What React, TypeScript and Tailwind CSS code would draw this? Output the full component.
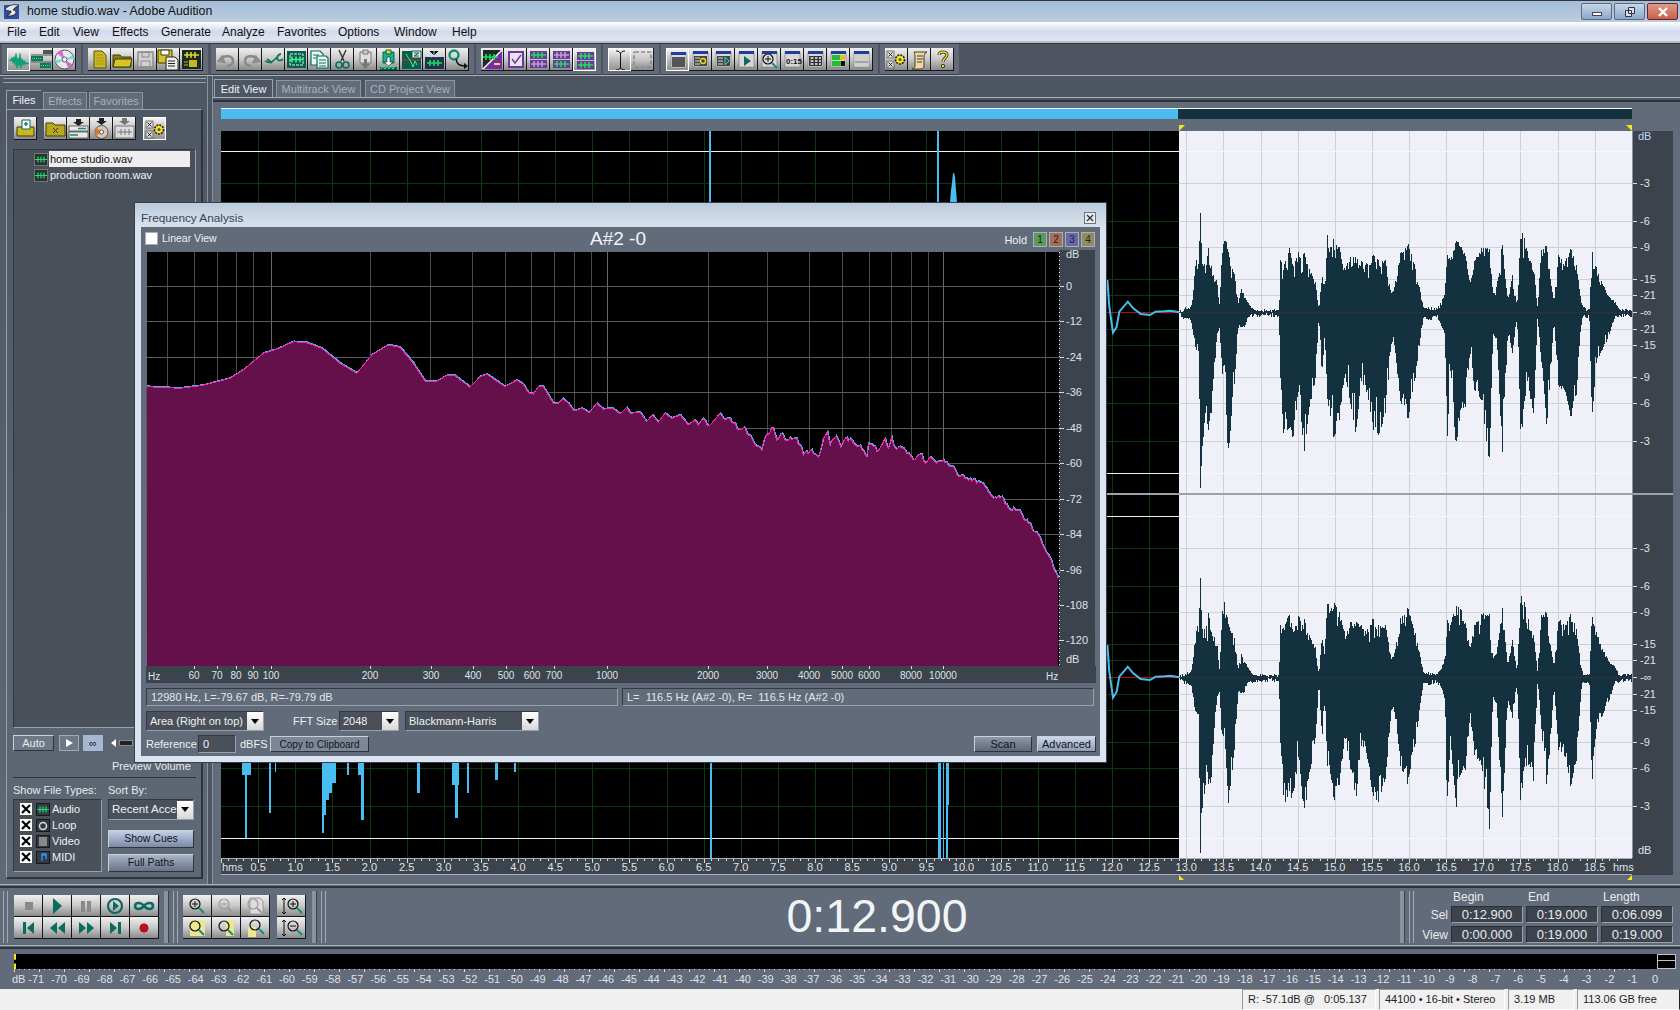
import React from "react";

type Kids = { children?: React.ReactNode };

// ---- data for the drawings ----

const freqZoom6 = [[50,560],[150,565],[220,556],[300,535],[340,510],[400,460],[440,448],[490,425],[530,428],[575,445],[630,490],[680,520],[725,465],[775,435],[810,442],[850,490],[885,543],[920,544],[950,527],[975,527],[1020,562],[1050,530],[1070,523],[1125,560],[1160,541],[1180,553],[1195,578],[1210,582],[1225,560],[1240,560],[1270,610],[1285,610],[1298,596],[1315,610],[1332,633],[1355,625],[1378,638],[1400,610],[1420,628],[1447,624],[1470,642],[1490,622]];
const freqZoom7 = [[0,640],[30,637],[50,665],[67,645],[85,667],[105,640],[125,655],[150,645],[175,675],[195,660],[205,675],[218,655],[232,677],[250,662],[270,640],[285,660],[295,655],[310,670],[330,690],[340,683],[365,715],[385,740],[395,750],[405,710],[430,685],[440,720],[455,700],[465,720],[500,715],[520,765],[545,750],[565,772],[580,715],[592,695],[600,735],[618,708],[632,740],[645,716],[665,720],[675,735],[690,735],[710,770],[715,730],[730,740],[745,752],[765,715],[775,745],[785,712],[795,745],[820,745],[850,780],[875,762],[885,790],[900,772],[920,790],[940,778],[965,798],[985,830],[1010,835],[1060,852],[1090,895],[1115,890],[1135,925],[1165,930],[1180,955],[1200,970],[1210,995],[1225,1005],[1245,1050],[1260,1075],[1275,1115],[1285,1135]];
const freqKnots = [
  ...freqZoom6.map(([x, y]) => [130 + x / 3, 200 + y / 3]),
  ...freqZoom7.map(([x, y]) => [630 + x / 3, 200 + y / 3]),
];

// the right half of the curve is jagged, so split it up and add a little noise
function buildFreq() {
  let s = 23;
  const rnd = () => {
    s = (s * 9301 + 49297) % 233280;
    return s / 233280 - 0.5;
  };
  const out: number[][] = [];
  freqKnots.forEach(([x, y], i) => {
    out.push([x, y]);
    const next = freqKnots[i + 1];
    if (!next || x < 700) return;
    const steps = Math.floor((next[0] - x) / 1.6);
    for (let j = 1; j < steps; j++) {
      const k = j / steps;
      out.push([x + (next[0] - x) * k, y + (next[1] - y) * k + rnd() * 4.5]);
    }
  });
  return out;
}
const freqPts = buildFreq();
const freqLine = freqPts.map(([x, y]) => `${x.toFixed(1)},${y.toFixed(1)}`).join(" ");
const freqArea = `147,666 ${freqLine} 1058,666`;

const envelope = [[214,577,577],[225,570,590],[245,560,600],[250,520,640],[258,405,690],[265,430,690],[270,278,1100],[275,430,980],[285,430,890],[292,380,930],[300,440,880],[315,470,640],[322,560,620],[328,380,770],[336,345,730],[344,385,1040],[352,430,920],[362,460,790],[372,550,620],[380,505,622],[390,530,620],[398,545,590],[410,570,585],[440,572,582],[482,573,582],[486,420,770],[495,430,965],[510,380,920],[520,440,955],[535,390,810],[550,395,1000],[565,450,860],[580,480,780],[590,570,585],[598,450,770],[606,500,640],[612,335,840],[620,380,880],[630,348,960],[645,380,900],[660,440,760],[675,410,850],[690,410,945],[705,420,780],[720,430,820],[735,395,930],[750,420,950],[770,420,880],[785,520,680],[792,510,660],[810,400,840],[830,365,900],[850,440,780],[865,520,650],[872,560,590],[885,565,595],[910,570,585],[930,520,640],[936,390,990],[945,420,750],[960,355,985],[975,375,860],[985,400,865],[998,490,690],[1010,420,810],[1030,380,840],[1050,380,1045],[1060,520,640],[1070,500,655],[1085,365,1010],[1100,540,640],[1112,460,700],[1125,560,590],[1135,325,980],[1145,350,840],[1160,420,840],[1170,440,890],[1180,560,590],[1190,390,720],[1205,375,920],[1218,500,720],[1225,540,610],[1237,400,800],[1255,420,810],[1270,385,910],[1285,430,830],[1300,560,590],[1320,575,585],[1327,385,900],[1340,440,720],[1355,490,690],[1375,530,640],[1390,545,585],[1400,568,585],[1437,572,582]];

function channelPath(shift: number, seed: number) {
  let s = seed;
  const rnd = () => {
    s = (s * 9301 + 49297) % 233280;
    return s / 233280;
  };
  let d = "";
  for (let i = 0; i < envelope.length - 1; i++) {
    const [x0, t0, b0] = envelope[i];
    const [x1, t1, b1] = envelope[i + 1];
    const px0 = 1100 + x0 / 2.7;
    const px1 = 1100 + x1 / 2.7;
    for (let x = Math.ceil(px0); x < px1; x++) {
      const k = (x - px0) / (px1 - px0);
      const top = t0 + (t1 - t0) * k;
      const bot = b0 + (b1 - b0) * k;
      const keep = Math.min(1, Math.min(k, 1 - k) * 5);
      const jt = rnd() * rnd() * (577 - top) * 0.4 * keep;
      const jb = rnd() * rnd() * (bot - 577) * 0.4 * keep;
      // quiet stretches get an uneven noise floor
      const nt = bot - top < 30 ? rnd() * 9 - 3 : 0;
      const nb = bot - top < 30 ? rnd() * 11 - 5 : 0;
      d += `M${x}.5 ${(120 + (top + jt - nt) / 3 + shift).toFixed(1)}V${(120 + (bot - jb + nb) / 3 + shift + 1).toFixed(1)}`;
    }
  }
  return d;
}
const tailPts = [[20,480],[25,560],[35,638],[45,620],[52,575],[75,545],[90,565],[110,582],[135,585],[150,575],[175,574],[190,572],[214,577]]
  .map(([x, y]) => `${(1100 + x / 2.7).toFixed(1)},${(120 + y / 3).toFixed(1)}`)
  .join(" ");

const dbRows: [number, string][] = [[183,"-3"],[221,"-6"],[247,"-9"],[279,"-15"],[295,"-21"],[312,"-∞"],[329,"-21"],[345,"-15"],[377,"-9"],[403,"-6"],[441,"-3"]];
const timeX = (t: number) => 221 + 74.25 * t;
const times = Array.from({ length: 37 }, (_, i) => (i + 1) * 0.5);
const ticks = Array.from({ length: 189 }, (_, i) => i * 0.1);
const blueSpikes: [number, number, number][] = [[245,2,838],[242,9,775],[269,2,813],[275,1,772],[322,2,833],[324,2,815],[326,3,800],[329,3,793],[332,4,783],[347,2,775],[361,3,820],[358,6,775],[417,3,793],[455,3,818],[452,7,785],[467,2,793],[495,3,780],[514,2,772],[710,2,858],[938,3,858],[943,1,858],[946,2,858],[948,1,805]];

const hzGrid = [167,194,217,236,253,271,370,430,472,505,531,554,574,591,607,708,767,809,842,869,891,911,928,943,1045];
const hzLabels: [number, string][] = [[194,"60"],[217,"70"],[236,"80"],[253,"90"],[271,"100"],[370,"200"],[431,"300"],[473,"400"],[506,"500"],[532,"600"],[554,"700"],[607,"1000"],[708,"2000"],[767,"3000"],[809,"4000"],[842,"5000"],[869,"6000"],[911,"8000"],[943,"10000"]];
const freqDb: [number, string][] = [[286,"0"],[321,"-12"],[357,"-24"],[392,"-36"],[428,"-48"],[463,"-60"],[499,"-72"],[534,"-84"],[570,"-96"],[605,"-108"],[640,"-120"]];
const meterDb = Array.from({ length: 72 }, (_, i) => -71 + i);

// ---- small icons ----

function Ic({ children, w = 23 }: Kids & { w?: number }) {
  return (
    <svg width={w} height={w === 23 ? 23 : 22} viewBox={`0 0 ${w} ${w === 23 ? 23 : 22}`} className="block">
      {children}
    </svg>
  );
}

const WAVE = "M1 11.500h2l1-3 1 6 1-7 1 9 1-12 1 15 1-11 1 9 1-13 1 15 1-10 1 7 1-5 1 4 1-2 1 1h2";

function WaveLines({ y = 11, c = "#1fdc5a", x = 0 }: { y?: number; c?: string; x?: number }) {
  return <path d={`M${x + 4} ${y}h15M${x + 7} ${y - 3}v6M${x + 11} ${y - 3}v6M${x + 15} ${y - 3}v6`} stroke={c} strokeWidth="1.6" fill="none" />;
}

function Mag({ x = 9, y = 9, fill = "none", c = "#111", h = "#0f8f7f", sign }: { x?: number; y?: number; fill?: string; c?: string; h?: string; sign?: string }) {
  return (
    <g>
      <circle cx={x} cy={y} r="5" fill={fill} stroke={c} strokeWidth="1.2" />
      <path d={`M${x + 4} ${y + 4}l5 5`} stroke={h} strokeWidth="2" />
      {sign && <path d={sign === "+" ? `M${x - 3} ${y}h6M${x} ${y - 3}v6` : `M${x - 3} ${y}h6`} stroke={c} strokeWidth="1" />}
    </g>
  );
}

function Win({ children }: Kids) {
  return (
    <Ic>
      <rect x="4" y="4" width="15" height="15" fill="#d8d8d8" stroke="#777" strokeWidth="0.6" />
      <rect x="4" y="3" width="15" height="3" fill="#1f3d9a" />
      {children}
    </Ic>
  );
}

function Gear() {
  return (
    <Ic>
      <rect x="2" y="3" width="7" height="7" fill="#ddd" stroke="#333" strokeWidth="0.6" />
      <path d="M3.5 4.5l4 4M7.5 4.5l-4 4" stroke="#222" />
      <rect x="2" y="13" width="7" height="7" fill="#ddd" stroke="#333" strokeWidth="0.6" />
      <path d="M3.5 14.5l4 4M7.5 14.5l-4 4" stroke="#222" />
      <circle cx="15" cy="11.500" r="4.500" fill="#f2e21e" stroke="#222" strokeWidth="1.600" strokeDasharray="2 1" />
      <circle cx="15" cy="11.500" r="1.500" fill="#555" />
    </Ic>
  );
}

const icons: Record<string, React.ReactNode> = {
  wave: <Ic><path d={WAVE} stroke="#0f9f78" strokeWidth="1.300" fill="none" /></Ic>,
  multi: <Ic><rect x="1" y="8" width="12" height="5" fill="#0c7a5a" /><rect x="10" y="15" width="11" height="5" fill="#0c7a5a" /><rect x="13" y="2" width="9" height="4" fill="#555" /><path d="M1 7h21M1 14h21" stroke="#555" /><path d="M2 10.500h10M11 17.500h9" stroke="#3fe08a" strokeDasharray="1 1" /></Ic>,
  cd: <Ic><circle cx="11.500" cy="11.500" r="9.500" fill="#e8e8ee" stroke="#555" /><path d="M11.500 11.500L4 5l5-3zM11.500 11.500l8 5-4 4z" fill="#d86ad8" /><path d="M11.500 11.500L20 7l1 4zM11.500 11.500L3 16l-1-4z" fill="#7ad8d0" /><circle cx="11.500" cy="11.500" r="2.500" fill="#fff" stroke="#555" /></Ic>,
  newDoc: <Ic><path d="M6 3h8l4 4v13H6z" fill="#c9b71f" stroke="#5a5210" /><path d="M8 7h7M8 10h8M8 13h8M8 16h8" stroke="#a8981a" /></Ic>,
  open: <Ic><path d="M2 7h7l2 2h9v10H2z" fill="#8a7c18" stroke="#3f3a0c" /><path d="M4 11h17l-2 8H2z" fill="#d6c522" stroke="#3f3a0c" /></Ic>,
  save: <Ic><path d="M4 4h15v15H4z" fill="#d0d0d0" stroke="#8a8a8a" strokeWidth="1.400" /><path d="M8 4h7v5H8zM7 13h9v6H7z" fill="none" stroke="#8a8a8a" /></Ic>,
  saveAs: <Ic><path d="M1 2h14v13H1z" fill="#d6c522" stroke="#3f3a0c" /><path d="M4 2h8v5H4z" fill="#fff" stroke="#3f3a0c" /><path d="M9 9h9l3 3v10H9z" fill="#eee" stroke="#222" /><path d="M11 13h7M11 15.500h7M11 18h7" stroke="#222" /></Ic>,
  insert: <Ic><rect x="2" y="2" width="19" height="19" fill="#1a2a22" /><WaveLines y={7} c="#e6d620" /><rect x="9" y="12" width="8" height="7" fill="#c9b71f" /><path d="M4 14h4M4 17h4" stroke="#c9b71f" /></Ic>,
  undo: <Ic><path d="M6 9l-3 4 5 1zM5 11c3-4 12-4 12 2 0 3-3 5-6 5" stroke="#8a8a8a" strokeWidth="2.400" fill="none" /></Ic>,
  redo: <Ic><path d="M17 9l3 4-5 1zM18 11c-3-4-12-4-12 2 0 3 3 5 6 5" stroke="#8a8a8a" strokeWidth="2.400" fill="none" /></Ic>,
  cue: <Ic><path d="M3 13c5 3 8 1 14-6M19 6c-3 0-5 4-3 6 2 1 4 0 5-1M5 11l5 4" stroke="#0c7a5a" strokeWidth="1.800" fill="none" /></Ic>,
  crop: <Ic><rect x="2" y="3" width="19" height="17" fill="#0a5e4e" /><rect x="5" y="6" width="13" height="11" fill="none" stroke="#d8f0e8" strokeDasharray="3 1" /><WaveLines y={11.500} c="#3ff08a" /></Ic>,
  copy: <Ic><path d="M3 3h9l3 3v11H3z" fill="#eafaf4" stroke="#0c6b5e" strokeWidth="1.200" /><path d="M9 8h9l2 2v10H9z" fill="#eafaf4" stroke="#0c6b5e" strokeWidth="1.200" /><path d="M5 7h6M5 10h3M11 12h7M11 15h7M11 18h7" stroke="#0c6b5e" /></Ic>,
  cut: <Ic><path d="M8 2l5 11M15 2l-5 11" stroke="#333" strokeWidth="1.400" /><circle cx="8" cy="17" r="3" fill="none" stroke="#0c6b5e" strokeWidth="1.600" /><circle cx="15" cy="17" r="3" fill="none" stroke="#0c6b5e" strokeWidth="1.600" /></Ic>,
  pasteOff: <Ic><path d="M6 4h11v11H6z" fill="#ddd" stroke="#777" /><path d="M9 2h5v4H9z" fill="#ccc" stroke="#777" /><path d="M10 11h3v5h3l-4.500 5L7 16h3z" fill="#777" /></Ic>,
  paste: <Ic><path d="M6 4h11v11H6z" fill="#19b09a" stroke="#064" /><path d="M9 2h5v4H9z" fill="#e6d620" stroke="#064" /><path d="M10 9h3v5h3l-4.500 4L7 14h3z" fill="#fff" stroke="#111" strokeWidth="0.600" /><path d="M3 19h17v3H3z" fill="#0a5e4e" /><path d="M4 21l2-3 2 3 2-3 2 3 2-3 2 3 2-3" stroke="#3ff08a" fill="none" /></Ic>,
  mix: <Ic><rect x="2" y="3" width="19" height="18" fill="#0a5e4e" /><rect x="12" y="3" width="9" height="7" fill="#e8f0ee" stroke="#0a5e4e" /><path d="M14 5h5l-5 3h5" stroke="#0a5e4e" fill="none" /><path d="M2 12h19" stroke="#e02020" /><path d="M6 6l5 8 2 5 2-6 2 4" stroke="#3ff08a" fill="none" /></Ic>,
  spark: <Ic><rect x="2" y="9" width="19" height="12" fill="#20344e" /><path d="M11 1v7M6 3l5 5 5-5M4 7l5 2M18 7l-5 2" stroke="#b8e8e0" /><WaveLines y={15} /></Ic>,
  qArrow: <Ic><circle cx="8" cy="7" r="4.500" fill="none" stroke="#0f8f6f" strokeWidth="2.400" /><path d="M10 11c1 5 3 7 9 7" stroke="#111" strokeWidth="1.400" fill="none" /><path d="M18 15l4 3-4 3z" fill="#111" /></Ic>,
  diag: <Ic><rect x="2" y="2" width="19" height="19" fill="#1c2a26" /><path d="M21 2v19H2z" fill="#7a2aa8" /><path d="M2 21L21 2" stroke="#fff" strokeWidth="1.400" /><WaveLines y={9} x={-2} /><path d="M13 16h6" stroke="#f4e020" strokeWidth="2" /></Ic>,
  check: <Ic><rect x="5" y="4" width="14" height="15" fill="#e8e2f2" stroke="#6a3a9a" strokeWidth="2" /><path d="M8 11l3 4 6-8" stroke="#6a3a9a" strokeWidth="1.400" fill="none" /></Ic>,
  grid1: <Ic><rect x="3" y="3" width="17" height="8" fill="#6a3a9a" /><rect x="3" y="12" width="17" height="8" fill="#6a3a9a" /><WaveLines y={7} /><WaveLines y={16} c="#b8a0c8" /></Ic>,
  grid2: <Ic><rect x="3" y="3" width="17" height="8" fill="#6a3a9a" /><rect x="3" y="12" width="17" height="8" fill="#6a3a9a" /><WaveLines y={7} c="#b8a0c8" /><WaveLines y={16} /></Ic>,
  grid3: <Ic><rect x="3" y="3" width="17" height="8" fill="#6a3a9a" /><rect x="3" y="12" width="17" height="8" fill="#6a3a9a" /><WaveLines y={7} /><WaveLines y={16} /></Ic>,
  ibeam: <Ic><path d="M7 2c3 0 4 1 4.500 3v13c-.5 2-1.500 3-4.500 3M16 2c-3 0-4 1-4.500 3v13c.5 2 1.500 3 4.500 3" stroke="#111" fill="none" /></Ic>,
  dashed: <Ic><rect x="3" y="4" width="17" height="15" rx="1" fill="none" stroke="#8a8a8a" strokeWidth="1.600" strokeDasharray="4 2" /></Ic>,
  w1: <Win><rect x="5" y="8" width="13" height="10" fill="#555" /></Win>,
  w2: <Win><rect x="5" y="8" width="13" height="10" fill="#444" /><path d="M6 10h5M6 13h5M6 16h5" stroke="#ddd" /><circle cx="14" cy="13" r="2.500" fill="none" stroke="#e6d620" strokeWidth="1.400" /></Win>,
  w3: <Win><rect x="5" y="8" width="13" height="10" fill="#444" /><path d="M6 10h5M6 13h5M6 16h5" stroke="#ddd" /><path d="M13 9l4 4-4 4z" fill="none" stroke="#3fd0c0" /></Win>,
  w4: <Win><path d="M9 8l7 5-7 5z" fill="#0c6b5e" /></Win>,
  w5: <Win><Mag x={10} y={11} sign="+" /></Win>,
  w6: <Win><text x="5" y="16" className="text-[8px] font-bold" fill="#111">0:15</text></Win>,
  w7: <Win><rect x="5" y="8" width="13" height="10" fill="#333" /><path d="M6.500 10h3M11 10h2.500M15 10h2M6.500 13h3M11 13h2.500M15 13h2M6.500 16h3M11 16h2.500M15 16h2" stroke="#eee" strokeWidth="1.500" /></Win>,
  w8: <Win><rect x="5" y="7" width="13" height="5" fill="#22c030" /><rect x="13" y="7" width="5" height="5" fill="#e8c020" /><rect x="5" y="13" width="13" height="5" fill="#22c030" /><rect x="14" y="13" width="4" height="5" fill="#111" /></Win>,
  w9: <Win><rect x="4.500" y="6" width="14" height="12.500" fill="#cfcfcf" /><path d="M5 14h13" stroke="#777" /></Win>,
  gear: <Gear />,
  scroll: <Ic><path d="M6 4h13c-2 1-3 3-3 5v9c0 2-2 3-4 3H4c2 0 3-2 3-3V8C7 6 6 5 6 4z" fill="#ecd9a8" stroke="#4a3a20" /><path d="M9 8h6M9 11h6M9 14h5" stroke="#4a3a20" /></Ic>,
  help: <Ic><path d="M8 7c0-4 8-4 8 0 0 3-4 3-4 7" stroke="#333" strokeWidth="3" fill="none" /><path d="M8 7c0-4 8-4 8 0 0 3-4 3-4 7" stroke="#f2e21e" strokeWidth="1.400" fill="none" /><circle cx="12" cy="18" r="1.700" fill="#f2e21e" stroke="#333" /></Ic>,
  fOpen: <Ic><path d="M3 10h17v9H3z" fill="#c9b71f" stroke="#3f3a0c" /><path d="M8 3h8v9H8z" fill="#fff" stroke="#0c6b5e" /><path d="M10 7h4M12 5v4" stroke="#0c8f6f" strokeWidth="1.500" /></Ic>,
  fClose: <Ic><path d="M2 6h7l2 2h10v11H2z" fill="#b8a81e" stroke="#3f3a0c" /><path d="M9 11l5 5M14 11l-5 5" stroke="#3f3a0c" /></Ic>,
  fInsert: <Ic><path d="M9 2h5v3h3l-5.500 4L6 5h3z" fill="#222" /><rect x="2" y="9" width="19" height="5" fill="#e8e8e8" stroke="#222" strokeWidth="0.600" /><rect x="2" y="15" width="19" height="6" fill="#e8e8e8" stroke="#222" strokeWidth="0.600" /><path d="M11 11.500h8M3 18h8" stroke="#0c8f6f" strokeWidth="1.600" /></Ic>,
  fCd: <Ic><path d="M9 1h5v3h3l-5.500 4L6 4h3z" fill="#222" /><circle cx="11.500" cy="15" r="6.500" fill="#d8c8b8" stroke="#555" /><path d="M11.500 15L6 19l-1-4 2-4z" fill="#e07a20" /><circle cx="11.500" cy="15" r="2" fill="#fff" stroke="#555" /></Ic>,
  fGray: <Ic><path d="M9 1h5v3h3l-5.500 4L6 4h3z" fill="#777" /><rect x="2" y="9" width="19" height="12" fill="#ddd" stroke="#777" /><path d="M4 15h15M8 12v6M12 12v6M16 12v6" stroke="#777" /></Ic>,
  stop: <Ic w={29}><rect x="11" y="7" width="8" height="8" fill="#8a8a8a" /></Ic>,
  play: <Ic w={29}><path d="M10 3l9 8-9 8z" fill="#0c6b5e" /></Ic>,
  pause: <Ic w={29}><path d="M9 6h4v11H9zM15 6h4v11h-4z" fill="#8a8a8a" /></Ic>,
  playCircle: <Ic w={29}><circle cx="14" cy="11" r="7" fill="none" stroke="#0c6b5e" strokeWidth="2.200" /><path d="M12 6l6 5-6 5z" fill="#0c6b5e" /></Ic>,
  loop: <Ic w={29}><path d="M14 11c-3-4-9-4-9 0s6 4 9 0c3-4 9-4 9 0s-6 4-9 0z" fill="none" stroke="#0c6b5e" strokeWidth="2.600" /></Ic>,
  first: <Ic w={29}><path d="M9 5h3v12H9zM20 5v12l-7-6z" fill="#0c6b5e" /></Ic>,
  rew: <Ic w={29}><path d="M14 5v12l-7-6zM22 5v12l-7-6z" fill="#0c6b5e" /></Ic>,
  ff: <Ic w={29}><path d="M7 5v12l7-6zM15 5v12l7-6z" fill="#0c6b5e" /></Ic>,
  last: <Ic w={29}><path d="M9 5v12l7-6zM17 5h3v12h-3z" fill="#0c6b5e" /></Ic>,
  rec: <Ic w={29}><circle cx="14" cy="11" r="4.500" fill="#b80f1f" /></Ic>,
  zIn: <Ic w={29}><Mag x={12} y={9} sign="+" /></Ic>,
  zOut: <Ic w={29}><Mag x={12} y={9} sign="-" c="#999" h="#999" /></Ic>,
  zDoc: <Ic w={29}><path d="M9 3h10l3 3v13H9z" fill="#ddd" stroke="#999" /><Mag x={12} y={9} c="#999" h="#999" /></Ic>,
  zY1: <Ic w={29}><rect x="7" y="3" width="15" height="16" fill="#ece890" /><Mag x={12} y={9} /></Ic>,
  zY2: <Ic w={29}><rect x="14" y="3" width="8" height="16" fill="#ece890" /><Mag x={12} y={9} /></Ic>,
  zY3: <Ic w={29}><rect x="7" y="10" width="8" height="10" fill="#ece890" /><Mag x={14} y={8} /></Ic>,
  zvIn: <Ic w={29}><path d="M7 3v16M5 5l2-2 2 2M5 17l2 2 2-2" stroke="#111" fill="none" /><Mag x={16} y={9} sign="+" /></Ic>,
  zvOut: <Ic w={29}><path d="M7 3v16M5 5l2-2 2 2M5 17l2 2 2-2" stroke="#111" fill="none" /><Mag x={16} y={9} sign="-" /></Ic>,
};

// ---- buttons ----

function Tool({ name, on }: { name: string; on?: boolean }) {
  return (
    <div
      className={
        on
          ? "h-[23px] w-[23px] border-t border-l border-[#111] border-r-white border-b-white bg-gradient-to-b from-[#f4f4f4] via-[#bdbdbd] to-[#8f8f8f] outline outline-white -outline-offset-1"
          : "h-[23px] w-[23px] border-r border-b border-[#14171b] bg-gradient-to-b from-[#f0f0f0] via-[#c9c9c9] to-[#8b8b8b]"
      }
    >
      {icons[name]}
    </div>
  );
}

function Group({ names, on = [], className }: { names: string[]; on?: string[]; className: string }) {
  return (
    <div className={`flex h-[31px] items-center border-b border-[#3c424b] bg-[#636b78] px-[5px] ${className}`}>
      {names.map((n) => (
        <Tool key={n} name={n} on={on.includes(n)} />
      ))}
    </div>
  );
}

function TransBtn({ name }: { name: string }) {
  return (
    <div className="h-[22px] w-[29px] border-r border-b border-[#14171b] bg-gradient-to-b from-[#f0f0f0] via-[#c9c9c9] to-[#8b8b8b]">
      {icons[name]}
    </div>
  );
}

function Grip() {
  return <div className="h-[52px] w-[5px] border-x border-[#a0a8b2] bg-[#626b79]" />;
}

function Sep() {
  return <div className="h-[52px] w-[5px] border-r border-[#3c424b] bg-[#8a929e]" />;
}

function Select({ label, className }: { label: string; className: string }) {
  return (
    <div className={`flex h-[20px] items-center justify-between border border-t-[#353a42] border-l-[#353a42] border-r-[#98a0aa] border-b-[#98a0aa] bg-[#4a505a] pl-[3px] text-[#eef0f2] ${className}`}>
      <span className="overflow-hidden whitespace-nowrap">{label}</span>
      <div className="flex h-[18px] w-[16px] shrink-0 items-center justify-center bg-gradient-to-b from-white to-[#d8d8d8]">
        <div className="h-0 w-0 border-x-[4px] border-t-[5px] border-x-transparent border-t-black" />
      </div>
    </div>
  );
}

function FlatBtn({ label, className }: { label: string; className: string }) {
  return (
    <div className={`flex items-center justify-center border border-t-[#c8d0d8] border-l-[#c8d0d8] border-r-[#2f343b] border-b-[#2f343b] text-[#10141a] ${className}`}>
      {label}
    </div>
  );
}

function FileType({ name, icon }: { name: string; icon: React.ReactNode }) {
  return (
    <div className="flex h-[16px] items-center pl-[6px]">
      <div className="h-[12px] w-[12px] bg-white">
        <svg width="12" height="12" viewBox="0 0 12 12"><path d="M2 2l8 8M10 2l-8 8" stroke="#000" strokeWidth="2.200" /></svg>
      </div>
      <div className="ml-[4px] h-[13px] w-[14px] border border-[#15181c] bg-[#353a42]">{icon}</div>
      <span className="ml-[2px] text-[11px] text-[#eef0f2]">{name}</span>
    </div>
  );
}

const miniWave = <svg width="12" height="11" viewBox="0 0 12 11"><path d="M0 5.500h12M3 2.500v6M6 2.500v6M9 2.500v6" stroke="#1fdc7a" strokeWidth="1.200" /></svg>;

// ---- panels ----

function LeftPanel() {
  return (
    <aside className="flex w-[207px] shrink-0 flex-col bg-gradient-to-b from-[#4f5663] to-[#5f6875]">
      <div className="mt-[2px] ml-[3px] h-[5px] w-[203px] border-y border-[#98a0aa]" />
      <div className="mt-[7px] ml-[6px] flex h-[19px] items-end text-[11px]">
        <div className="flex h-[19px] w-[35px] items-center justify-center border-t border-l border-[#98a0aa] border-r-[#2f343b] text-[#f0f2f4]">Files</div>
        <div className="ml-[2px] flex h-[17px] w-[44px] items-center justify-center border-t border-x border-[#8c94a0] bg-[#626b79] text-[#aab0b8]">Effects</div>
        <div className="ml-[2px] flex h-[17px] w-[54px] items-center justify-center border-t border-x border-[#8c94a0] bg-[#626b79] text-[#aab0b8]">Favorites</div>
      </div>
      <div className="ml-[6px] flex h-[770px] w-[197px] flex-col border-t border-l border-[#98a0aa] border-r-2 border-b-2 border-r-[#2f343b] border-b-[#2f343b] px-[6px]">
        <div className="mt-[7px] flex pl-[1px]">
          <Tool name="fOpen" />
          <div className="ml-[7px] flex">
            <Tool name="fClose" />
            <Tool name="fInsert" />
            <Tool name="fCd" />
            <Tool name="fGray" />
          </div>
          <div className="ml-[7px]">
            <Tool name="gear" on />
          </div>
        </div>
        <div className="mt-[9px] h-[579px] w-[183px] border-t border-l border-[#33383f] border-r border-b border-r-[#98a0aa] border-b-[#98a0aa] bg-[#4a505a] pt-[1px] pl-[20px] text-[11px]">
          <div className="flex h-[16px] items-center">
            <div className="h-[13px] w-[14px] border border-[#777] bg-[#26322c]">{miniWave}</div>
            <div className="ml-[1px] flex h-[16px] w-[141px] items-center bg-[#eeeeee] pl-[1px] text-[#111]">home studio.wav</div>
          </div>
          <div className="flex h-[16px] items-center">
            <div className="h-[13px] w-[14px] border border-[#777] bg-[#26322c]">{miniWave}</div>
            <div className="ml-[1px] pl-[1px] text-[#f0f2f4]">production room.wav</div>
          </div>
        </div>
        <div className="mt-[7px] flex h-[16px] items-center">
          <FlatBtn label="Auto" className="h-[16px] w-[41px] bg-[#6e7785] text-[11px] !text-[#e8eaec]" />
          <div className="ml-[5px] flex h-[16px] w-[20px] items-center justify-center border border-[#a0a8b2] bg-[#6e7785]">
            <div className="h-0 w-0 border-y-[4px] border-l-[7px] border-y-transparent border-l-white" />
          </div>
          <div className="ml-[4px] flex h-[16px] w-[20px] items-center justify-center bg-[#a7b7d0] text-[11px] text-[#222]">∞</div>
          <div className="ml-[8px] h-0 w-0 border-y-[4px] border-r-[5px] border-y-transparent border-r-white" />
          <div className="ml-[3px] h-[6px] w-[14px] border border-[#888] bg-[#222]" />
        </div>
        <div className="mt-[8px] h-[14px] pl-[99px] text-[11px] leading-[14px] whitespace-nowrap text-[#e8eaec]">Preview Volume</div>
        <div className="mt-[3px] h-[2px] w-[183px] border-b border-[#2f343b]" />
        <div className="mt-[5px] flex h-[15px] text-[11px] leading-[15px] text-[#e8eaec]">
          <span className="w-[95px]">Show File Types:</span>
          <span>Sort By:</span>
        </div>
        <div className="mt-[1px] flex">
          <div className="h-[73px] w-[89px] border border-t-[#33383f] border-l-[#33383f] border-r-[#98a0aa] border-b-[#98a0aa] bg-[#4a505a] pt-[1px]">
            <FileType name="Audio" icon={miniWave} />
            <FileType name="Loop" icon={<svg width="12" height="11" viewBox="0 0 12 11"><circle cx="6" cy="6" r="3.500" fill="none" stroke="#ddd" strokeWidth="1.500" /></svg>} />
            <FileType name="Video" icon={<svg width="12" height="11" viewBox="0 0 12 11"><rect x="2" y="1" width="8" height="9" fill="#888" /></svg>} />
            <FileType name="MIDI" icon={<svg width="12" height="11" viewBox="0 0 12 11"><path d="M5 9V2h4v5M5 3h4" stroke="#2f8fff" strokeWidth="1.400" fill="none" /></svg>} />
          </div>
          <div className="ml-[6px] w-[86px]">
            <Select label="Recent Acce" className="h-[21px] w-[86px] text-[11.5px]" />
            <FlatBtn label="Show Cues" className="mt-[10px] h-[18px] w-[86px] bg-gradient-to-b from-[#c4d0e6] to-[#7a8aa8] text-[10.5px]" />
            <FlatBtn label="Full Paths" className="mt-[6px] h-[18px] w-[86px] bg-gradient-to-b from-[#a8b4c8] to-[#6a7488] text-[10.5px]" />
          </div>
        </div>
      </div>
    </aside>
  );
}

function WaveView() {
  const dbGrid = [183, 221, 247, 279, 295, 329, 345, 377, 403, 441];
  const hLines = [...dbGrid, ...dbGrid.map((y) => y + 365)];
  const centers = [312, 677];
  const whites = [151, 473, 516, 838];
  const verts = times.slice(0, 37).map(timeX);
  const ch1 = channelPath(0, 17);
  const ch2 = channelPath(365, 91);
  return (
    <svg width="1452" height="744" viewBox="221 131 1452 744" className="block">
      <rect x="221" y="131" width="958" height="727" fill="#000" />
      <rect x="1179" y="131" width="453" height="727" fill="#eff0f8" />
      <rect x="1632" y="131" width="41" height="744" fill="#3d434d" />
      <rect x="221" y="858" width="1411" height="17" fill="#3d434d" />
      {verts.map((x) => (
        <g key={x}>
          <path d={`M${Math.round(x)}.5 131V858`} stroke={x < 1179 ? "#0d380d" : "#cdd3d3"} shapeRendering="crispEdges" fill="none" />
        </g>
      ))}
      {hLines.map((y) => (
        <g key={y}>
          <path d={`M221 ${y}.5H1179`} stroke="#0d380d" shapeRendering="crispEdges" />
          <path d={`M1179 ${y}.5H1632`} stroke="#cdd3d3" shapeRendering="crispEdges" />
        </g>
      ))}
      {whites.map((y) => (
        <g key={y}>
          <path d={`M221 ${y}.5H1179`} stroke="#f0f0f0" shapeRendering="crispEdges" />
          <path d={`M1179 ${y}.5H1632`} stroke="#f8f8fc" shapeRendering="crispEdges" />
        </g>
      ))}
      {centers.map((y) => (
        <path key={y} d={`M1100 ${y}.5H1179`} stroke="#a81414" shapeRendering="crispEdges" />
      ))}
      <path d={`${ch1}${ch2}`} stroke="#14313f" strokeWidth="1" fill="none" shapeRendering="crispEdges" />
      {centers.map((y) => (
        <path key={y} d={`M1179 ${y}.5H1632`} stroke="#5a2a30" strokeDasharray="2 2" shapeRendering="crispEdges" />
      ))}
      <polyline points={tailPts} fill="none" stroke="#49bdf0" strokeWidth="2" />
      <polyline points={tailPts} transform="translate(0 365)" fill="none" stroke="#49bdf0" strokeWidth="2" />
      <rect x="709" y="131" width="2" height="71" fill="#49bdf0" />
      <rect x="937" y="131" width="2" height="71" fill="#49bdf0" />
      <path d="M950 202l1-12 1-7 1-10 1 0 1 4 1 13 1 12z" fill="#49bdf0" />
      {blueSpikes.map(([x, w, y]) => (
        <rect key={x} x={x} y="763" width={w} height={y - 763} fill="#49bdf0" />
      ))}
      <rect x="221" y="493" width="1452" height="2" fill="#9aa2ac" />
      <path d="M1632.500 131V858" stroke="#8a929e" shapeRendering="crispEdges" />
      <path d="M1673.500 131V858" stroke="#8a929e" shapeRendering="crispEdges" />
      <path d="M221 858.500H1632M221 874.500H1632" stroke="#a8b0ba" shapeRendering="crispEdges" />
      {ticks.map((t) => (
        <path key={t} d={`M${Math.round(timeX(t))}.5 859v${Math.round(t * 10) % 5 === 0 ? 4 : 2}`} stroke="#d8dce0" shapeRendering="crispEdges" />
      ))}
      {times.map((t) => (
        <text key={t} x={timeX(t)} y="871" textAnchor="middle" className="fill-[#dfe2e6] text-[11px]">{t.toFixed(1)}</text>
      ))}
      <text x="222" y="871" className="fill-[#dfe2e6] text-[11px]">hms</text>
      <text x="1613" y="871" className="fill-[#dfe2e6] text-[11px]">hms</text>
      {[0, 365].map((s) =>
        dbRows.map(([y, l]) => (
          <g key={`${s}${y}`}>
            <path d={`M1633 ${y + s}.5h4`} stroke="#d8dce0" shapeRendering="crispEdges" />
            <text x="1640" y={y + s + 4} className="fill-[#dfe2e6] text-[11px]">{l}</text>
          </g>
        ))
      )}
      <text x="1638" y="140" className="fill-[#bcd8f0] text-[11px]">dB</text>
      <text x="1638" y="854" className="fill-[#dfe2e6] text-[11px]">dB</text>
    </svg>
  );
}

function FreqChart() {
  return (
    <svg width="950" height="433" viewBox="146 250 950 433" className="block">
      <rect x="147" y="252" width="912" height="414" fill="#000" />
      <rect x="1059" y="250" width="36" height="433" fill="#3d434d" />
      <rect x="146" y="666" width="950" height="17" fill="#3d434d" />
      {hzGrid.map((x) => (
        <path key={x} d={`M${x}.5 252V666`} stroke={x === 271 || x === 607 || x === 943 ? "#6a6a6a" : "#4a4a4a"} shapeRendering="crispEdges" />
      ))}
      {freqDb.map(([y]) => (
        <path key={y} d={`M147 ${y}.5H1059`} stroke="#5a5a5a" shapeRendering="crispEdges" />
      ))}
      <polygon points={freqArea} fill="#64104a" />
      <polyline points={freqLine} transform="translate(0.6 -0.8)" fill="none" stroke="#3fb4e8" strokeWidth="1" shapeRendering="crispEdges" />
      <polyline points={freqLine} fill="none" stroke="#ff20a8" strokeWidth="1" shapeRendering="crispEdges" />
      <path d="M1059.500 252V666" stroke="#e8e8e8" strokeDasharray="1 3" shapeRendering="crispEdges" />
      {freqDb.map(([y, l]) => (
        <g key={y}>
          <path d={`M1060 ${y}.5h4`} stroke="#d8dce0" shapeRendering="crispEdges" />
          <text x="1066" y={y + 4} className="fill-[#dfe2e6] text-[11px]">{l}</text>
        </g>
      ))}
      <text x="1066" y="258" className="fill-[#dfe2e6] text-[11px]">dB</text>
      <text x="1066" y="663" className="fill-[#dfe2e6] text-[11px]">dB</text>
      {hzLabels.map(([x, l]) => (
        <g key={l}>
          <path d={`M${x}.5 666v3`} stroke="#d8dce0" shapeRendering="crispEdges" />
          <text x={x} y="679" textAnchor="middle" className="fill-[#dfe2e6] text-[10px]">{l}</text>
        </g>
      ))}
      <text x="148" y="680" className="fill-[#dfe2e6] text-[10px]">Hz</text>
      <text x="1046" y="680" className="fill-[#dfe2e6] text-[10px]">Hz</text>
    </svg>
  );
}

function FreqDialog() {
  const holds = [
    ["1", "bg-[#5c9a5c]"],
    ["2", "bg-[#a86c5a]"],
    ["3", "bg-[#6a68aa]"],
    ["4", "bg-[#8c8c5c]"],
  ];
  return (
    <div className="absolute top-[202px] left-[134px] flex h-[561px] w-[973px] flex-col border border-[#3a3f47] bg-[#d9e4f0]">
      <div className="flex h-[24px] shrink-0 items-start justify-between bg-gradient-to-b from-[#bccbdd] to-[#d8e2ec] pt-[8px] pr-[10px] pl-[6px] text-[11.8px] leading-[14px] text-[#3a4450]">
        <span>Frequency Analysis</span>
        <div className="mt-[1px] flex h-[12px] w-[12px] items-center justify-center border border-[#6a7480] bg-[#e8ecf0]">
          <svg width="8" height="8" viewBox="0 0 8 8"><path d="M1 1l6 6M7 1l-6 6" stroke="#333" strokeWidth="1.400" /></svg>
        </div>
      </div>
      <div className="mx-[6px] flex h-[529px] flex-col bg-[#626b79]">
        <div className="relative flex h-[23px] shrink-0 items-center pl-[4px]">
          <div className="h-[13px] w-[13px] border border-[#aab] bg-white" />
          <span className="ml-[4px] text-[10.500px] text-[#eef0f2]">Linear View</span>
          <span className="absolute top-[0px] left-[449px] text-[19px] leading-[23px] text-[#f4f6f8]">A#2 -0</span>
          <span className="ml-auto shrink-0 pt-[2px] text-[11px] leading-[14px] whitespace-nowrap text-[#eef0f2]">Hold</span>
          <div className="mt-[2px] mr-[5px] ml-[6px] flex shrink-0 gap-[2px]">
            {holds.map(([n, c]) => (
              <div key={n} className={`flex h-[15px] w-[14px] items-center justify-center border border-[#aab0b8] text-[10px] leading-none text-[#222] ${c}`}>{n}</div>
            ))}
          </div>
        </div>
        <div className="ml-[5px]">
          <FreqChart />
        </div>
        <div className="mt-[5px] flex gap-[4px] pl-[5px] text-[11px] whitespace-pre text-[#e4e6ea]">
          <div className="flex h-[18px] w-[472px] items-center border border-t-[#353a42] border-l-[#353a42] border-r-[#98a0aa] border-b-[#98a0aa] pl-[4px]">12980 Hz, L=-79.67 dB, R=-79.79 dB</div>
          <div className="flex h-[18px] w-[472px] items-center border border-t-[#353a42] border-l-[#353a42] border-r-[#98a0aa] border-b-[#98a0aa] pl-[4px]">L=  116.5 Hz (A#2 -0), R=  116.5 Hz (A#2 -0)</div>
        </div>
        <div className="mt-[5px] flex items-center pl-[5px]">
          <Select label="Area (Right on top)" className="w-[118px] text-[11px]" />
          <span className="ml-[29px] w-[46px] text-[11px] whitespace-nowrap text-[#eef0f2]">FFT Size</span>
          <Select label="2048" className="w-[60px] text-[11px]" />
          <Select label="Blackmann-Harris" className="ml-[6px] w-[134px] text-[11px]" />
        </div>
        <div className="mt-[4px] flex items-center pr-[4px] pl-[5px] text-[11px] text-[#eef0f2]">
          <span className="w-[52px]">Reference</span>
          <div className="flex h-[18px] w-[38px] items-center border border-t-[#353a42] border-l-[#353a42] border-r-[#98a0aa] border-b-[#98a0aa] bg-[#4a505a] pl-[4px]">0</div>
          <span className="ml-[4px] w-[30px]">dBFS</span>
          <FlatBtn label="Copy to Clipboard" className="h-[16px] w-[99px] bg-[#7e8798] text-[10px]" />
          <FlatBtn label="Scan" className="ml-auto h-[16px] w-[58px] bg-gradient-to-b from-[#8e98aa] to-[#5f6878] text-[11px]" />
          <FlatBtn label="Advanced" className="ml-[5px] h-[16px] w-[59px] bg-gradient-to-b from-[#cdd8ea] to-[#8e9cb8] text-[11px]" />
        </div>
      </div>
    </div>
  );
}

export default function App() {
  return (
    <div className="relative flex h-[1010px] w-[1680px] flex-col overflow-hidden bg-[#626b79] font-['Liberation_Sans',Arial,sans-serif]">
      {/* title bar */}
      <div className="flex h-[22px] shrink-0 items-center border-t border-[#333] bg-gradient-to-b from-[#a2bcd8] to-[#bdcddd] pl-[3px]">
        <svg width="18" height="17" viewBox="0 0 18 17">
          <rect x="1" y="2" width="15" height="14" fill="#2f4f9a" />
          <path d="M2 6c4-4 8-5 14-4-3 2-5 3-6 5 2 0 3 1 3 3-2 3-6 3-9 3 3-2 4-3 4-5-2 0-4 0-6-2z" fill="#e8e8e8" stroke="#111" strokeWidth="0.700" />
        </svg>
        <span className="ml-[6px] text-[12.300px] text-[#111]">home studio.wav - Adobe Audition</span>
        <div className="mr-[2px] ml-auto flex gap-[2px]">
          <div className="flex h-[17px] w-[31px] items-center justify-center rounded-[2px] border border-[#5a6a80] bg-gradient-to-b from-[#c8d8e8] to-[#8aa8c8]">
            <div className="mt-[4px] h-[4px] w-[10px] border border-[#445] bg-white" />
          </div>
          <div className="flex h-[17px] w-[31px] items-center justify-center rounded-[2px] border border-[#5a6a80] bg-gradient-to-b from-[#c8d8e8] to-[#8aa8c8]">
            <svg width="12" height="12" viewBox="0 0 12 12"><path d="M4.500 1.500h6v6h-6zM1.500 4.500h6v6h-6z" fill="#dde" stroke="#334" /></svg>
          </div>
          <div className="flex h-[17px] w-[31px] items-center justify-center rounded-[2px] border border-[#6a2030] bg-gradient-to-b from-[#dc9a8a] to-[#c8604a]">
            <svg width="12" height="10" viewBox="0 0 12 10"><path d="M2 1l8 8M10 1l-8 8" stroke="#fff" strokeWidth="2.400" /></svg>
          </div>
        </div>
      </div>
      {/* menu */}
      <div className="relative h-[21px] shrink-0 border-b-2 border-[#b8bcc4] bg-gradient-to-b from-white via-[#d2daec] to-[#e2e6f0] text-[12px] leading-[20px] text-[#111]">
        {[["File", "left-[7px]"], ["Edit", "left-[39px]"], ["View", "left-[73px]"], ["Effects", "left-[112px]"], ["Generate", "left-[161px]"], ["Analyze", "left-[222px]"], ["Favorites", "left-[277px]"], ["Options", "left-[338px]"], ["Window", "left-[394px]"], ["Help", "left-[452px]"]].map(([m, l]) => (
          <span key={m} className={`absolute top-0 ${l}`}>{m}</span>
        ))}
      </div>
      {/* toolbar */}
      <div className="flex h-[33px] shrink-0 border-t border-[#2f343b] border-b border-b-[#a8b0ba] bg-[#4f5560]">
        <Group names={["wave", "multi", "cd"]} on={["wave"]} className="ml-[2px]" />
        <Group names={["newDoc", "open", "save", "saveAs", "insert"]} className="ml-[2px]" />
        <Group names={["undo", "redo", "cue", "crop", "copy", "cut", "pasteOff", "paste", "mix", "spark", "qArrow"]} className="ml-[3px]" />
        <Group names={["diag", "check", "grid1", "grid2", "grid3"]} on={["grid3"]} className="ml-[2px]" />
        <Group names={["ibeam", "dashed"]} on={["ibeam"]} className="ml-[2px]" />
        <Group names={["w1", "w2", "w3", "w4", "w5", "w6", "w7", "w8", "w9"]} on={["w1"]} className="ml-[2px]" />
        <Group names={["gear", "scroll", "help"]} className="ml-[2px]" />
      </div>
      {/* main */}
      <div className="flex h-[808px] shrink-0">
        <LeftPanel />
        <div className="w-[6px] shrink-0 border-x border-[#8a929e] bg-[#4f5663]" />
        <div className="flex min-w-0 flex-1 flex-col">
          <div className="flex h-[21px] shrink-0 items-end bg-[#4f5663] pl-[1px] text-[11px]">
            <div className="flex h-[18px] w-[59px] items-center justify-center border-t border-x border-[#98a0aa] bg-[#4f5663] pt-[1px] text-[#f0f2f4]">Edit View</div>
            <div className="ml-[3px] flex h-[17px] w-[85px] items-center justify-center border-t border-x border-[#8c94a0] bg-[#626b79] pt-[1px] text-[#aab0b8]">Multitrack View</div>
            <div className="ml-[4px] flex h-[17px] w-[90px] items-center justify-center border-t border-x border-[#8c94a0] bg-[#626b79] pt-[1px] text-[#aab0b8]">CD Project View</div>
          </div>
          <div className="h-[5px] shrink-0 border-t border-b-2 border-t-[#a8b0ba] border-b-[#2f343b] bg-[#4f5663]" />
          <div className="mt-[6px] ml-[8px] flex h-[11px] w-[1411px] shrink-0 border-t border-white bg-[#14313f]">
            <div className="h-full w-[957px] bg-[#49bdf0]" />
          </div>
          <div className="relative ml-[8px] h-[12px] w-[1411px] shrink-0">
            <div className="absolute bottom-0 left-[958px] h-0 w-0 border-t-[6px] border-r-[6px] border-t-[#f5e61e] border-r-transparent" />
            <div className="absolute right-0 bottom-0 h-0 w-0 border-t-[6px] border-l-[6px] border-t-[#f5e61e] border-l-transparent" />
          </div>
          <div className="ml-[8px]">
            <WaveView />
          </div>
          <div className="relative ml-[8px] h-[5px] w-[1411px]">
            <div className="absolute top-0 left-[958px] h-0 w-0 border-b-[5px] border-r-[5px] border-b-[#f5e61e] border-r-transparent" />
            <div className="absolute top-0 right-0 h-0 w-0 border-b-[5px] border-l-[5px] border-b-[#f5e61e] border-l-transparent" />
          </div>
        </div>
      </div>
      <div className="h-[4px] shrink-0 border-t border-b-2 border-t-[#a8b0ba] border-b-[#2f343b] bg-[#626b79]" />
      {/* transport */}
      <div className="flex h-[57px] shrink-0 items-center">
        <div className="ml-[3px]"><Grip /></div>
        <div className="ml-[6px] grid grid-cols-5">
          {["stop", "play", "pause", "playCircle", "loop", "first", "rew", "ff", "last", "rec"].map((n) => (
            <TransBtn key={n} name={n} />
          ))}
        </div>
        <div className="ml-[5px]"><Sep /></div>
        <div className="ml-[4px]"><Grip /></div>
        <div className="ml-[5px] grid grid-cols-3">
          {["zIn", "zOut", "zDoc", "zY1", "zY2", "zY3"].map((n) => (
            <TransBtn key={n} name={n} />
          ))}
        </div>
        <div className="ml-[7px] flex flex-col">
          <TransBtn name="zvIn" />
          <TransBtn name="zvOut" />
        </div>
        <div className="ml-[6px]"><Sep /></div>
        <div className="ml-[4px]"><Grip /></div>
        <div className="flex-1 pl-[28px] text-center text-[46.500px] leading-[57px] text-[#f2f5f8]">0:12.900</div>
        <Sep />
        <div className="ml-[4px]"><Grip /></div>
        <div className="ml-[2px] flex w-[264px] flex-col self-start pr-[5px] text-[13px] text-[#e8eaec]">
          <div className="flex h-[18px] pl-[35px] text-[12px] leading-[18px]">
            <span className="ml-[2px] w-[75px]">Begin</span>
            <span className="w-[75px]">End</span>
            <span>Length</span>
          </div>
          {[["Sel", "0:12.900", "0:19.000", "0:06.099"], ["View", "0:00.000", "0:19.000", "0:19.000"]].map((r) => (
            <div key={r[0]} className="mb-[3px] flex h-[17px] items-center gap-[3px]">
              <span className="w-[32px] text-right text-[12px]">{r[0]}</span>
              {r.slice(1).map((v, i) => (
                <div key={i} className="flex h-[17px] w-[72px] items-center justify-center border border-t-[#2a2e35] border-l-[#2a2e35] border-r-[#98a0aa] border-b-[#98a0aa] bg-[#3d434d]">{v}</div>
              ))}
            </div>
          ))}
        </div>
      </div>
      <div className="h-[4px] shrink-0 border-t border-b-2 border-t-[#a8b0ba] border-b-[#2f343b] bg-[#626b79]" />
      {/* meter */}
      <div className="h-[40px] shrink-0">
        <div className="mt-[5px] flex h-[15px] pl-[14px]">
          <div className="h-full w-[1643px] border-l-2 border-dashed border-l-[#f5e61e] bg-black" />
          <div className="flex h-full w-[19px] flex-col border border-[#c0c4c8] bg-black">
            <div className="h-[6px] border-b border-[#c0c4c8]" />
          </div>
        </div>
        <svg width="1680" height="20" viewBox="0 0 1680 20" className="block">
          {Array.from({ length: 325 }, (_, i) => (
            <path key={i} d={`M${14 + i * 5}.5 0v${i % 5 === 0 ? 3 : 1}`} stroke="#d8dce0" shapeRendering="crispEdges" />
          ))}
          <text x="12" y="14" className="fill-[#dfe2e6] text-[11px]">dB</text>
          {meterDb.map((d) => (
            <text key={d} x={1655 + 22.8 * d} y="14" textAnchor="middle" className="fill-[#dfe2e6] text-[11px]">{d}</text>
          ))}
        </svg>
      </div>
      {/* status bar */}
      <div className="flex h-[21px] shrink-0 justify-end gap-[3px] bg-[#f0f0f0] text-[11px] leading-[19px] whitespace-pre text-[#222]">
        <div className="w-[134px] border border-t-[#999] border-l-[#999] border-r-white border-b-white pl-[5px]">R: -57.1dB @   0:05.137</div>
        <div className="w-[126px] border border-t-[#999] border-l-[#999] border-r-white border-b-white pl-[5px]">44100 • 16-bit • Stereo</div>
        <div className="w-[66px] border border-t-[#999] border-l-[#999] border-r-white border-b-white pl-[5px]">3.19 MB</div>
        <div className="w-[103px] border border-t-[#999] border-l-[#999] border-b-white pl-[5px]">113.06 GB free</div>
      </div>
      <FreqDialog />
    </div>
  );
}
